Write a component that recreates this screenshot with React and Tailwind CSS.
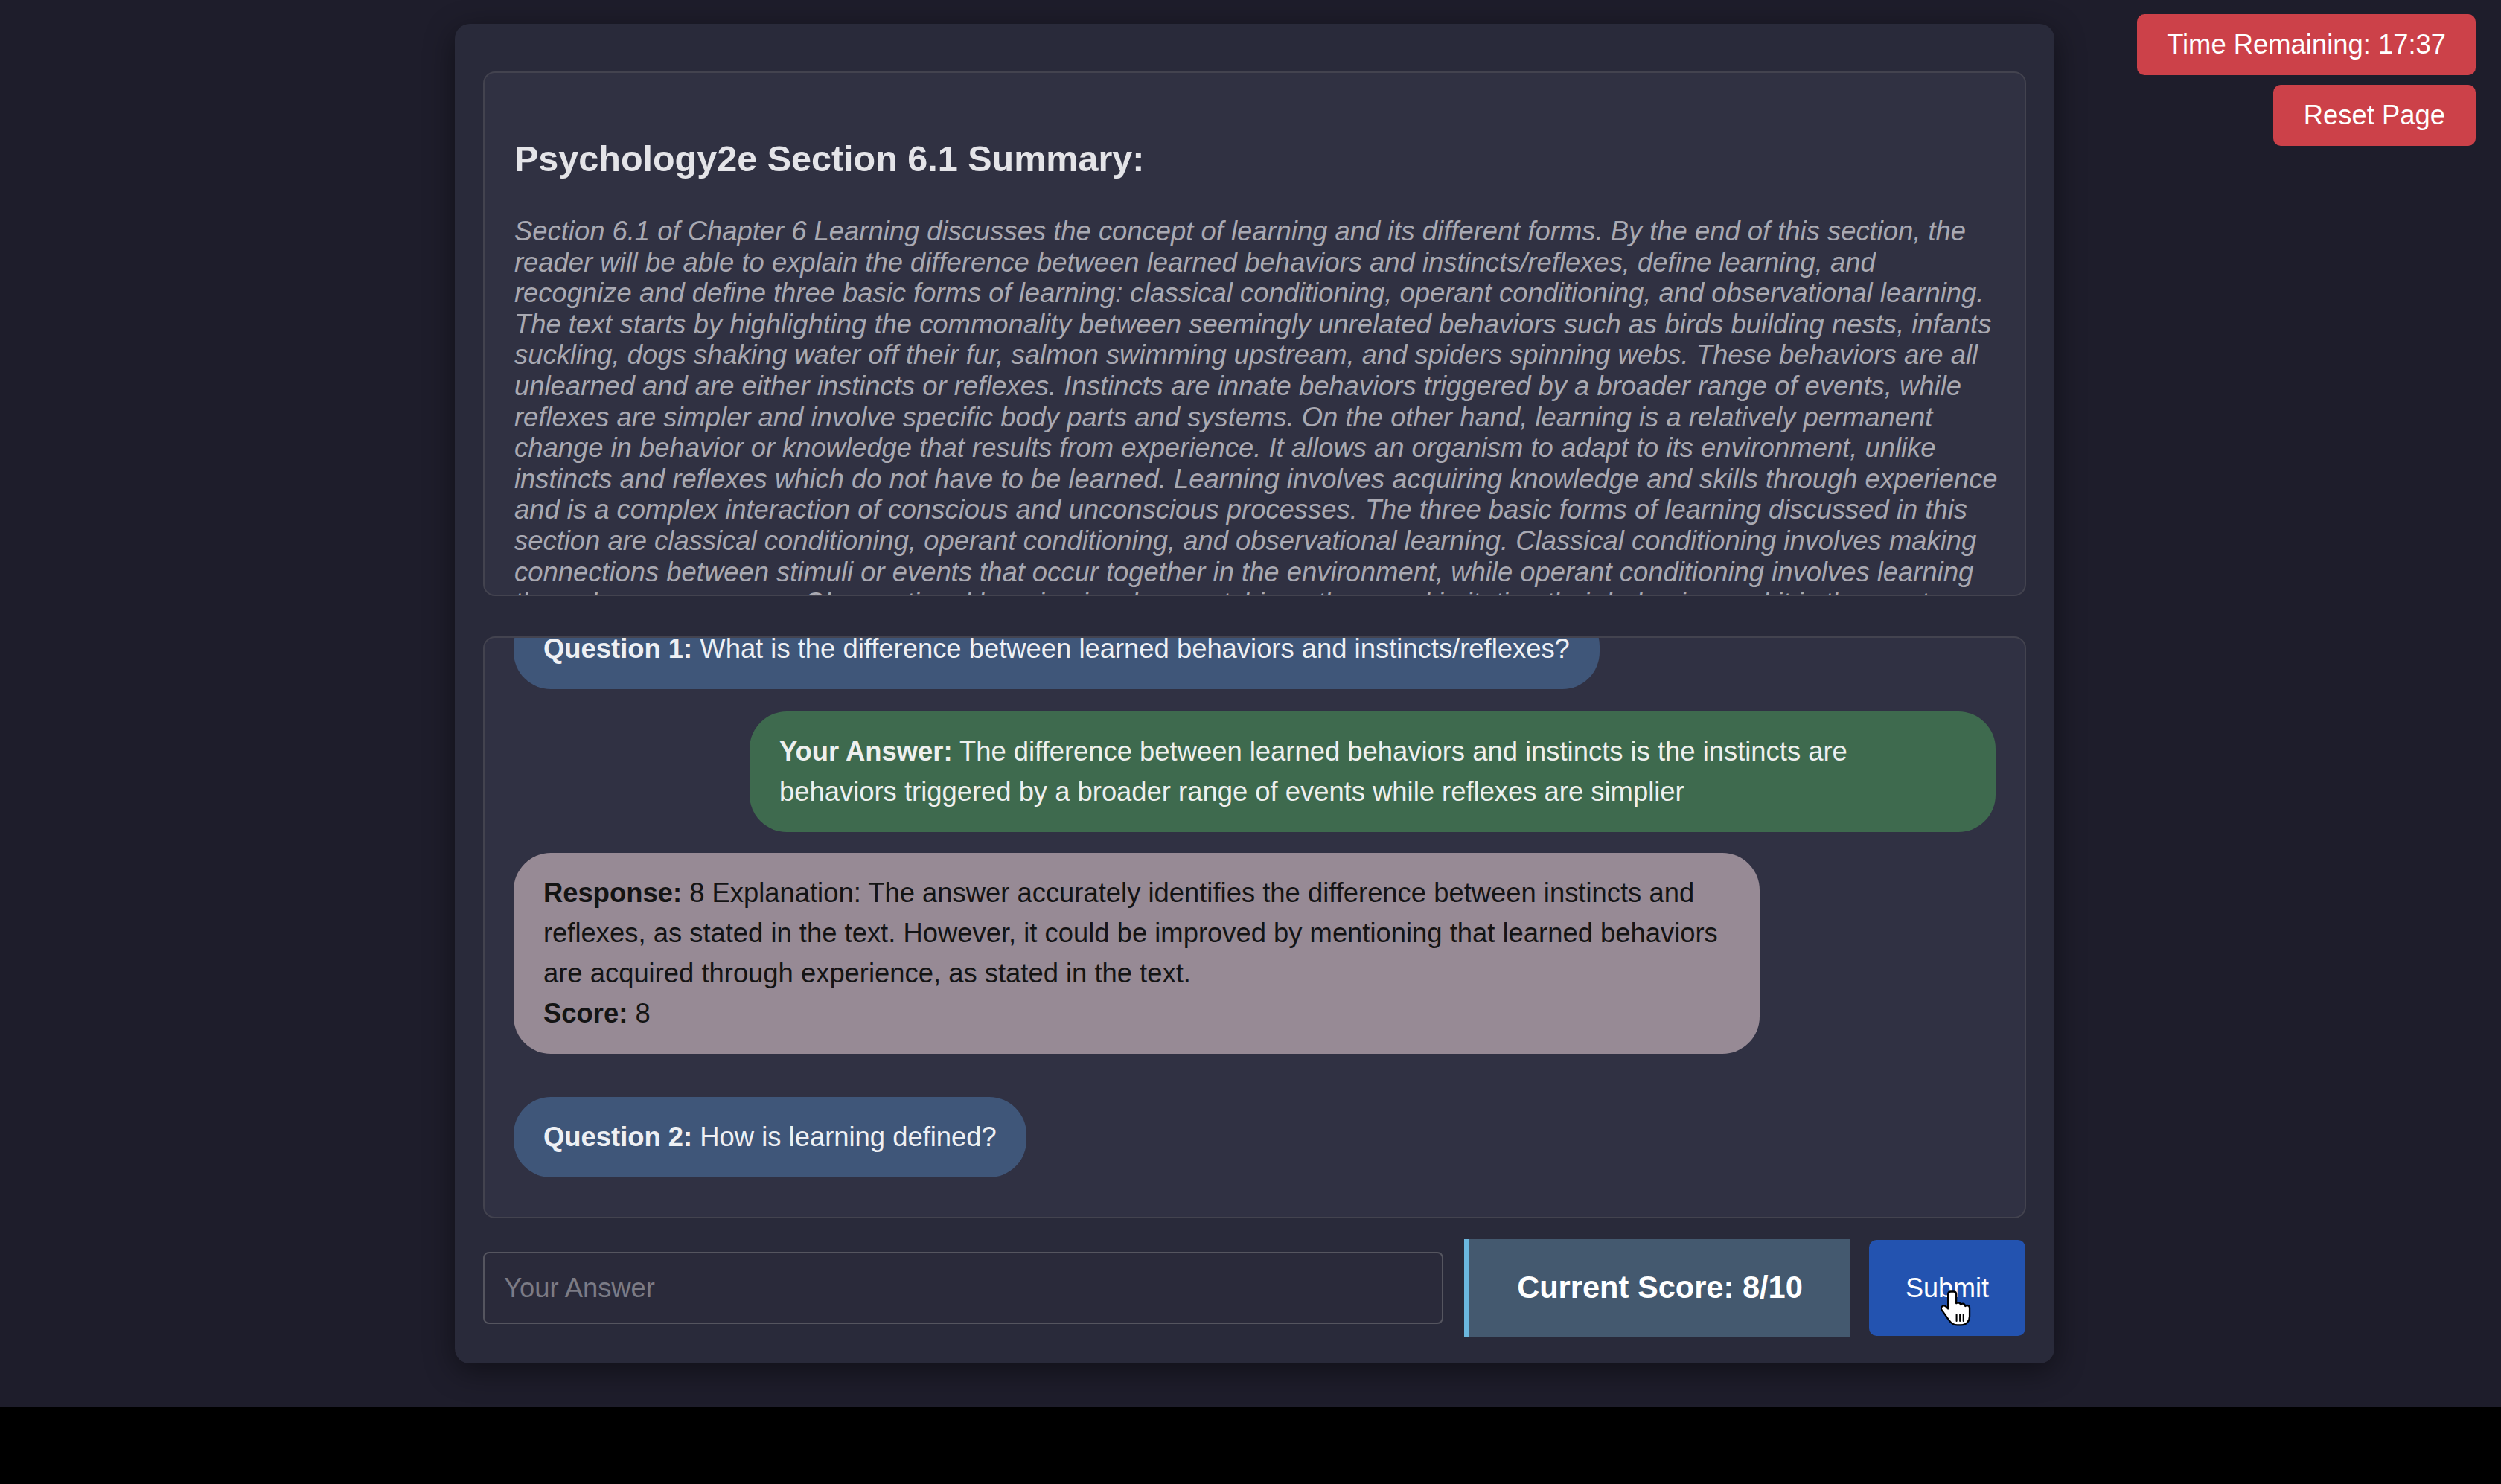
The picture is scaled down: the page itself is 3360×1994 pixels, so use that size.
import React from 'react';

const summaryLines = [
  'Section 6.1 of Chapter 6 Learning discusses the concept of learning and its different forms. By the end of this section, the',
  'reader will be able to explain the difference between learned behaviors and instincts/reflexes, define learning, and',
  'recognize and define three basic forms of learning: classical conditioning, operant conditioning, and observational learning.',
  'The text starts by highlighting the commonality between seemingly unrelated behaviors such as birds building nests, infants',
  'suckling, dogs shaking water off their fur, salmon swimming upstream, and spiders spinning webs. These behaviors are all',
  'unlearned and are either instincts or reflexes. Instincts are innate behaviors triggered by a broader range of events, while',
  'reflexes are simpler and involve specific body parts and systems. On the other hand, learning is a relatively permanent',
  'change in behavior or knowledge that results from experience. It allows an organism to adapt to its environment, unlike',
  'instincts and reflexes which do not have to be learned. Learning involves acquiring knowledge and skills through experience',
  'and is a complex interaction of conscious and unconscious processes. The three basic forms of learning discussed in this',
  'section are classical conditioning, operant conditioning, and observational learning. Classical conditioning involves making',
  'connections between stimuli or events that occur together in the environment, while operant conditioning involves learning',
  'through consequences. Observational learning involves watching others and imitating their behavior, and it is the most',
  'common way in which people learn new skills.',
];

// macOS style pointing hand cursor
function HandCursor() {
  return (
    <svg width="44" height="52" viewBox="0 0 21 25" className="absolute left-[96px] top-[67px]">
      <path
        d="M6.5 1.2c-1 0-1.7.7-1.7 1.7v9.4l-1.3-1.4c-.8-.8-2-.8-2.7 0-.6.6-.6 1.6 0 2.3l4.4 6.2c1.2 1.7 2.8 3.4 5.6 3.4h2.4c3.3 0 5.5-2.4 5.5-5.7v-5.4c0-1-.7-1.6-1.6-1.6-.5 0-.9.2-1.2.5 0-.9-.8-1.6-1.6-1.6-.6 0-1 .3-1.3.7-.2-.8-.9-1.4-1.7-1.4-.5 0-.9.2-1.2.5V2.9c0-1-.7-1.7-1.6-1.7z"
        fill="#fff"
        stroke="#000"
        strokeWidth="1.1"
        strokeLinejoin="round"
      />
      <path d="M10.3 16v4.2M12.5 16v4.2M14.7 16v4.2" stroke="#000" strokeWidth="1" strokeLinecap="round" />
    </svg>
  );
}

function Bubble({ label, children, className }) {
  return (
    <div className={`rounded-[50px] px-[40px] py-[27px] text-[36.4px] leading-[54px] ${className}`}>
      <b>{label}</b> {children}
    </div>
  );
}

export default function App() {
  return (
    <div className="w-full h-[1994px] bg-black font-['Liberation_Sans',Arial,sans-serif]">
      <div className="relative h-[1890px] bg-[#1e1d2b] pt-[32px]">
        {/* timer + reset */}
        <div className="absolute top-[19px] right-[34px] flex flex-col items-end gap-[13px]">
          <div className="bg-[#cc4149] text-white text-[36.4px] px-[40px] py-[20px] rounded-[10px] leading-[42px]">
            Time Remaining: 17:37
          </div>
          <button className="bg-[#cc4149] text-white text-[36.4px] px-[41px] py-[20px] rounded-[10px] leading-[42px]">
            Reset Page
          </button>
        </div>

        <div className="ml-[611px] w-[2149px] bg-[#292a3a] rounded-[20px] pt-[64px] pb-[36px] px-[38px] shadow-[0_10px_40px_rgba(0,0,0,0.45)]">
          {/* summary */}
          <div className="h-[705px] overflow-hidden rounded-[16px] border-2 border-[#43434f] bg-[#303142] px-[40px] pt-[48px]">
            <h2 className="text-[48.5px] font-bold text-[#e4e4e8] leading-[55px] mt-[40px] mb-[49px]">
              Psychology2e Section 6.1 Summary:
            </h2>
            <p className="italic text-[36.4px] leading-[41.6px] text-[#a9a9b2] whitespace-nowrap">
              {summaryLines.map((line, i) => (
                <span key={i} className="block">
                  {line}
                </span>
              ))}
            </p>
          </div>

          {/* chat */}
          <div className="mt-[54px] h-[782px] overflow-hidden rounded-[16px] border-2 border-[#43434f] bg-[#303143] px-[39px]">
            <div className="flex flex-col items-start">
              <Bubble label="Question 1:" className="-mt-[39px] bg-[#3f5679] text-[#eef0f4]">
                What is the difference between learned behaviors and instincts/reflexes?
              </Bubble>
              <Bubble label="Your Answer:" className="mt-[30px] self-end w-[1674px] bg-[#3e6a4e] text-[#eef0ee]">
                The difference between learned behaviors and instincts is the instincts are behaviors triggered by a
                broader range of events while reflexes are simplier
              </Bubble>
              <div className="mt-[28px] w-[1674px] rounded-[50px] px-[40px] py-[27px] text-[36.4px] leading-[54px] bg-[#978a95] text-[#141414]">
                <b>Response:</b> 8 Explanation: The answer accurately identifies the difference between instincts and
                reflexes, as stated in the text. However, it could be improved by mentioning that learned behaviors are
                acquired through experience, as stated in the text.
                <br />
                <b>Score:</b> 8
              </div>
              <Bubble label="Question 2:" className="mt-[58px] bg-[#3f5679] text-[#eef0f4]">
                How is learning defined?
              </Bubble>
            </div>
          </div>

          {/* input row */}
          <div className="mt-[28px] flex items-center">
            <input
              type="text"
              placeholder="Your Answer"
              className="w-[1290px] h-[97px] rounded-[8px] border-2 border-[#55555f] bg-[#2a2a3a] px-[26px] text-[36.4px] text-white placeholder:text-[#7b7b85] outline-none"
            />
            <div className="ml-[28px] w-[519px] h-[131px] flex items-center justify-center border-l-[7px] border-[#6bb7de] bg-[#44596f] text-white text-[41.6px] font-bold">
              Current Score: 8/10
            </div>
            <button className="relative ml-[25px] w-[210px] h-[129px] rounded-[10px] bg-[#2353b0] text-white text-[36px]">
              Submit
              <HandCursor />
            </button>
          </div>
        </div>
      </div>
    </div>
  );
}
